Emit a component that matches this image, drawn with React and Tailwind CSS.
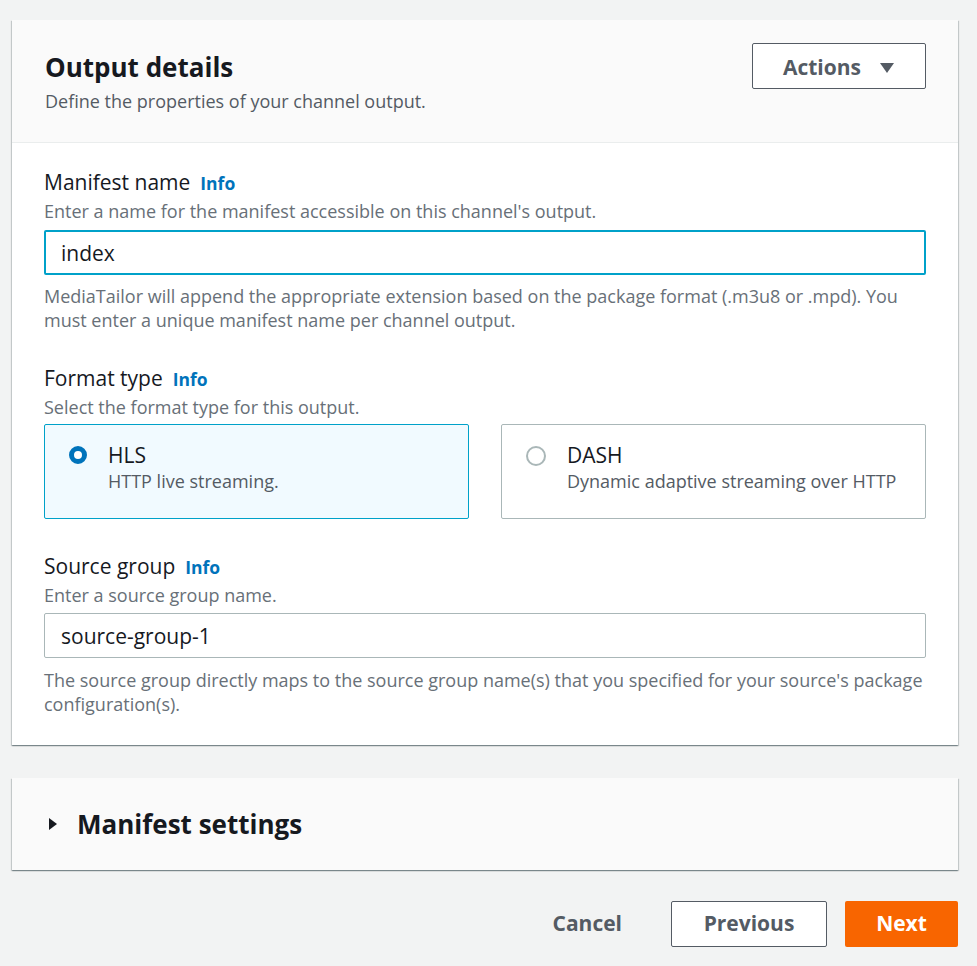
import React, { useState } from "react";

const font = { fontFamily: '"Open Sans", "Noto Sans", Arial, sans-serif' };

const InfoLink = () => (
  <a href="#" className="ml-[10px] text-[17.5px] font-bold text-[#0073bb]">
    Info
  </a>
);

const FieldLabel = ({ children }) => (
  <div className="flex items-baseline text-[21px] leading-[26px] text-[#16191f]">
    {children}
    <InfoLink />
  </div>
);

const Radio = ({ checked }) =>
  checked ? (
    <span className="mt-[4px] h-[18px] w-[18px] shrink-0 rounded-full border-[5px] border-[#0073bb] bg-white" />
  ) : (
    <span className="mt-[4px] h-[20px] w-[20px] shrink-0 rounded-full border-2 border-[#aab7b8] bg-white" />
  );

const FormatTile = ({ title, description, checked, onSelect }) => (
  <button
    type="button"
    onClick={onSelect}
    className={`flex h-[95px] gap-[21px] rounded-[2px] border pl-[24px] pr-4 pt-[17px] text-left ${
      checked ? "border-[#00a1c9] bg-[#f1faff]" : "border-[#aab7b8] bg-white"
    }`}
  >
    <Radio checked={checked} />
    <div>
      <div className="text-[21px] leading-[26px] text-[#16191f]">{title}</div>
      <div className="mt-[2px] text-[18px] leading-[22px] text-[#545b64]">
        {description}
      </div>
    </div>
  </button>
);

export default function App() {
  const [format, setFormat] = useState("hls");
  const [manifestName, setManifestName] = useState("index");
  const [sourceGroup, setSourceGroup] = useState("source-group-1");

  return (
    <div className="min-h-[966px] bg-[#f2f3f3] px-[12px] pt-[20px] pb-[19px]" style={font}>
      {/* Output details card */}
      <div className="w-[946px] bg-white shadow-[0_1px_1px_0_rgba(0,28,36,0.3),1px_1px_1px_0_rgba(0,28,36,0.15),-1px_1px_1px_0_rgba(0,28,36,0.15)]">
        <div className="flex items-start justify-between border-b border-[#eaeded] bg-[#fafafa] pl-[33px] pr-[32px] pt-[23px] pb-[30px]">
          <div className="pt-[8px]">
            <h2 className="text-[26px] font-bold leading-[32px] text-[#16191f]">
              Output details
            </h2>
            <p className="mt-[7px] text-[18px] leading-[22px] text-[#545b64]">
              Define the properties of your channel output.
            </p>
          </div>
          <button
            type="button"
            className="flex h-[46px] w-[174px] items-center justify-center gap-[18px] rounded-[2px] border border-[#545b64] bg-white pt-[3px] text-[21px] font-bold text-[#545b64]"
          >
            Actions
            <svg width="16" height="12" viewBox="0 0 16 12">
              <path d="M1 1h14L8 11z" fill="#545b64" />
            </svg>
          </button>
        </div>

        <div className="px-[32px] pt-[26px] pb-[29px]">
          {/* Manifest name */}
          <FieldLabel>Manifest name</FieldLabel>
          <p className="mt-[4px] text-[18px] leading-[22px] text-[#687078]">
            Enter a name for the manifest accessible on this channel's output.
          </p>
          <input
            value={manifestName}
            onChange={(e) => setManifestName(e.target.value)}
            className="mt-[8px] h-[45px] w-full rounded-[2px] border-2 border-[#00a1c9] bg-white px-[15px] text-[21px] text-[#16191f] outline-none"
          />
          <p className="mt-[9px] text-[18px] leading-[24px] text-[#687078]">
            MediaTailor will append the appropriate extension based on the package format (.m3u8 or .mpd). You must enter a unique manifest name per channel output.
          </p>

          {/* Format type */}
          <div className="mt-[33px]">
            <FieldLabel>Format type</FieldLabel>
          </div>
          <p className="mt-[4px] text-[18px] leading-[22px] text-[#687078]">
            Select the format type for this output.
          </p>
          <div className="mt-[6px] grid grid-cols-2 gap-[32px]">
            <FormatTile
              title="HLS"
              description="HTTP live streaming."
              checked={format === "hls"}
              onSelect={() => setFormat("hls")}
            />
            <FormatTile
              title="DASH"
              description="Dynamic adaptive streaming over HTTP"
              checked={format === "dash"}
              onSelect={() => setFormat("dash")}
            />
          </div>

          {/* Source group */}
          <div className="mt-[34px]">
            <FieldLabel>Source group</FieldLabel>
          </div>
          <p className="mt-[4px] text-[18px] leading-[22px] text-[#687078]">
            Enter a source group name.
          </p>
          <input
            value={sourceGroup}
            onChange={(e) => setSourceGroup(e.target.value)}
            className="mt-[7px] h-[45px] w-full rounded-[2px] border border-[#aab7b8] bg-white px-[16px] text-[21px] text-[#16191f] outline-none"
          />
          <p className="mt-[10px] text-[18px] leading-[24px] text-[#687078]">
            The source group directly maps to the source group name(s) that you specified for your source's package configuration(s).
          </p>
        </div>
      </div>

      {/* Manifest settings card */}
      <div className="mt-[33px] flex h-[92px] w-[946px] items-center gap-[19px] bg-[#fafafa] pl-[36px] shadow-[0_1px_1px_0_rgba(0,28,36,0.3),1px_1px_1px_0_rgba(0,28,36,0.15),-1px_1px_1px_0_rgba(0,28,36,0.15)]">
        <svg width="10" height="14" viewBox="0 0 10 14">
          <path d="M1 1l8 6-8 6z" fill="#16191f" />
        </svg>
        <h2 className="text-[26px] font-bold leading-[32px] text-[#16191f]">
          Manifest settings
        </h2>
      </div>

      {/* Footer actions */}
      <div className="mt-[31px] flex w-[946px] items-center justify-end">
        <button
          type="button"
          className="h-[46px] px-[24px] text-[21px] font-bold text-[#545b64]"
        >
          Cancel
        </button>
        <button
          type="button"
          className="ml-[25px] h-[46px] w-[156px] rounded-[2px] border border-[#545b64] bg-white text-[21px] font-bold text-[#545b64]"
        >
          Previous
        </button>
        <button
          type="button"
          className="ml-[18px] h-[46px] w-[113px] rounded-[2px] bg-[#f86500] text-[21px] font-bold text-white"
        >
          Next
        </button>
      </div>
    </div>
  );
}
